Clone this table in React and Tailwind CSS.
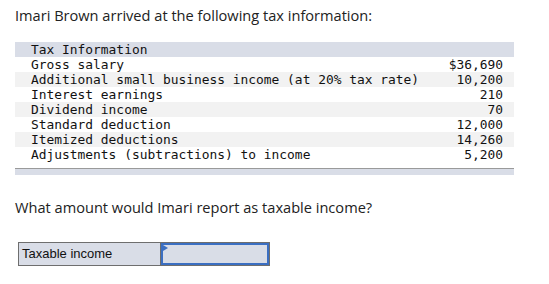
export default function App() {
  const rows = [
    ["Gross salary", "$36,690"],
    ["Additional small business income (at 20% tax rate)", "10,200"],
    ["Interest earnings", "210"],
    ["Dividend income", "70"],
    ["Standard deduction", "12,000"],
    ["Itemized deductions", "14,260"],
    ["Adjustments (subtractions) to income", "5,200"],
  ];
  const prose = { fontFamily: '"Open Sans", "Liberation Sans", Arial, sans-serif' };
  return (
    <div className="w-[549px] h-[284px] bg-white pl-[15px] pt-[5px] text-[#222]" style={prose}>
      <p className="text-[14.6px] leading-[20px] text-[#222]" style={prose}>
        Imari Brown arrived at the following tax information:
      </p>
      <div className="mt-[17px] w-[499px]" style={{ fontFamily: '"DejaVu Sans Mono", monospace' }}>
        <div className="h-[15px] bg-[#d9dde7] pl-[16px] text-[12.9px] leading-[15px] text-[#111]">Tax Information</div>
        {rows.map(([label, value], i) => (
          <div
            key={label}
            className={`flex h-[15px] items-center justify-between pl-[16px] pr-[11px] text-[12.9px] leading-[15px] text-[#111] ${i % 2 === 1 ? "bg-[#f2f2f2]" : "bg-white"}`}
          >
            <span className="whitespace-pre">{label}</span>
            <span className="whitespace-pre">{value}</span>
          </div>
        ))}
        <div className="mt-[6px] h-px bg-[#9a9a9a]" />
        <div className="h-[6px] bg-[#d9dde7]" />
      </div>
      <p className="mt-[22px] text-[14.6px] leading-[20px] text-[#222]" style={prose}>
        What amount would Imari report as taxable income?
      </p>
      <div className="mt-[25px] ml-[3px] flex h-[24px] w-[252px] border border-[#6e6e6e] bg-[#d9dde7]">
        <div className="flex w-[142px] items-center border-r border-[#6e6e6e] pl-[3px] text-[13px] text-[#111]" style={{ fontFamily: '"Liberation Sans", Arial, sans-serif' }}>
          Taxable income
        </div>
        <div className="relative flex-1 border-2 border-[#3b6fc2] bg-[#d9dde7]">
          <svg className="absolute left-0 top-0" width="5" height="6" viewBox="0 0 5 6">
            <polygon points="0,0 5,3 0,6" fill="#3b6fc2" />
          </svg>
        </div>
      </div>
    </div>
  );
}
